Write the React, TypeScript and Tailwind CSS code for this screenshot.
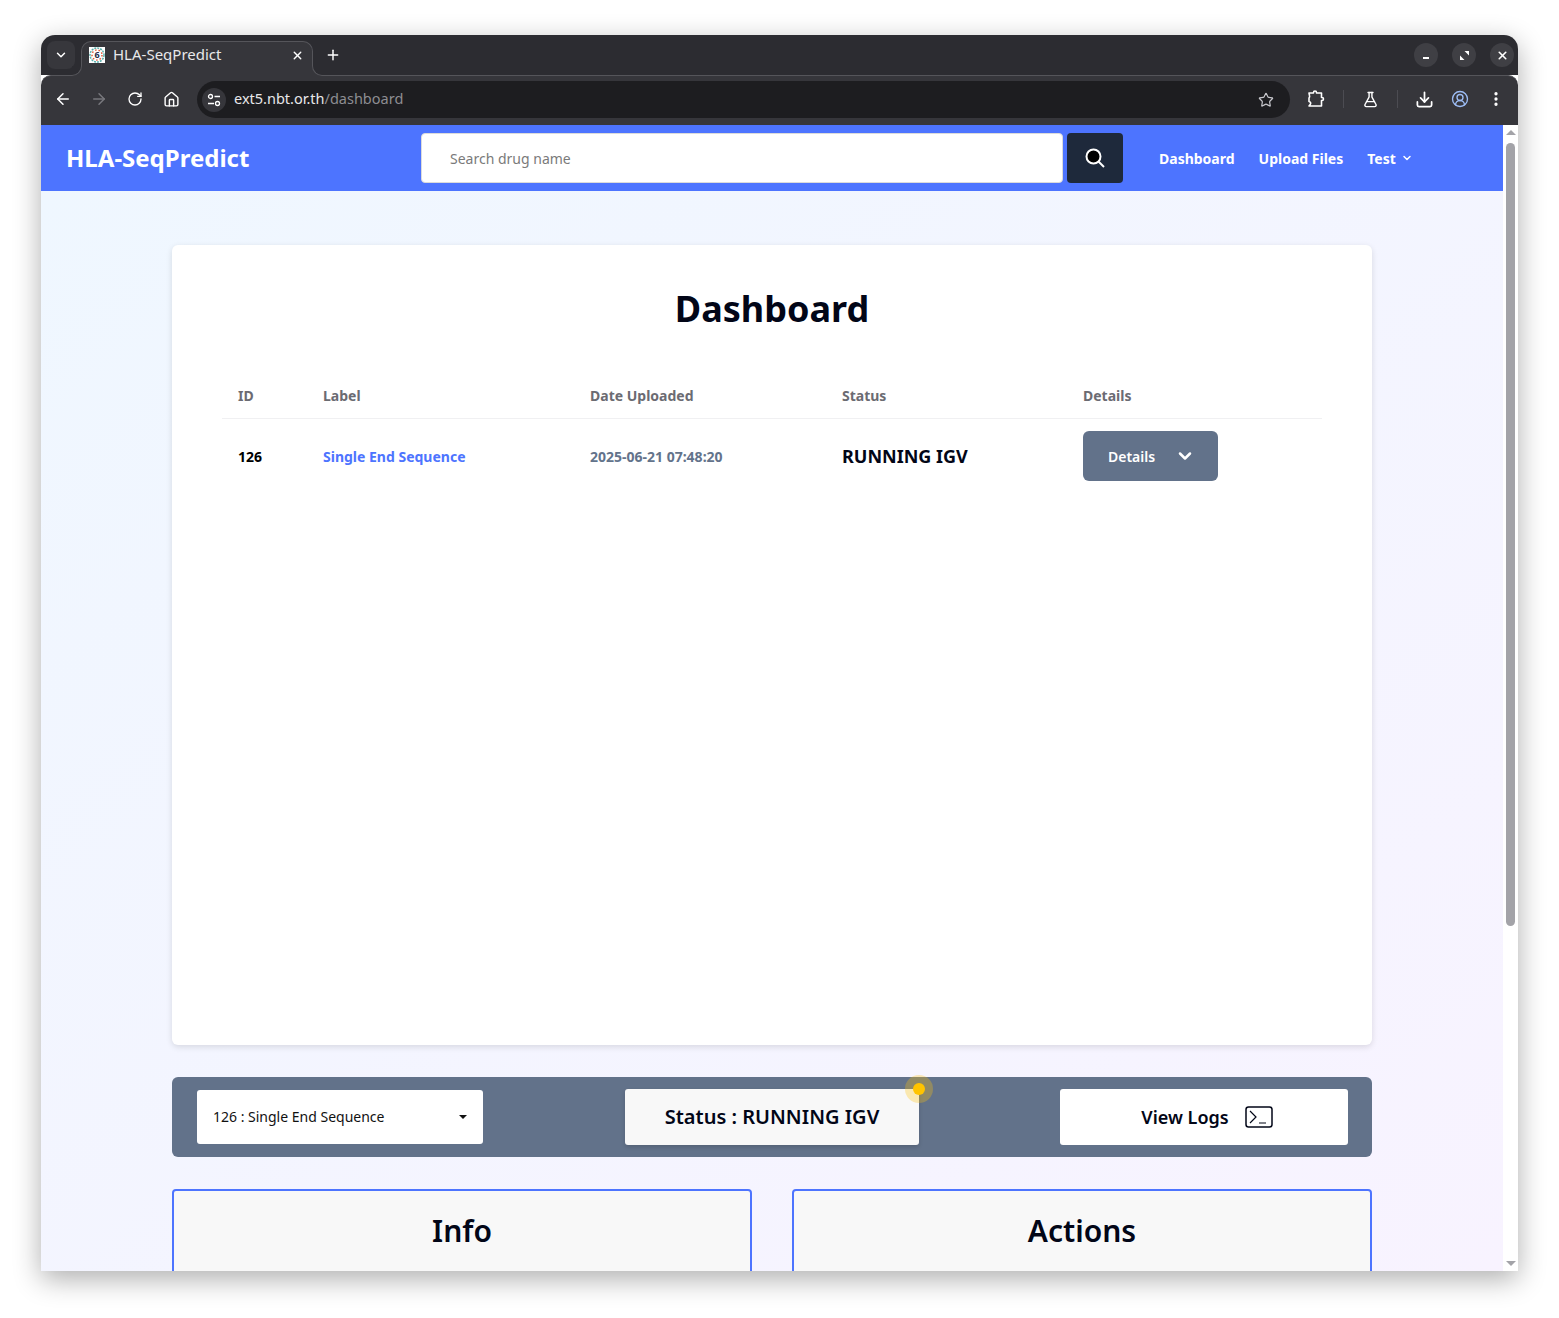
import React from 'react'
import { ArrowLeft, ArrowRight, ChevronDown, House, Plus, RotateCw, Star, X, EllipsisVertical, FlaskConical, Download, CircleUserRound } from 'lucide-react'

const ui = "font-['Noto_Sans',sans-serif]"

const Favicon = () => (
  <svg width="16" height="16" viewBox="0 0 16 16" className="shrink-0 bg-white">
    <circle cx="8" cy="8" r="7" fill="none" stroke="#5ab0ac" strokeWidth="1.500" strokeDasharray="2 1" />
    <circle cx="8" cy="8" r="5" fill="none" stroke="#e2603f" strokeWidth="1.500" strokeDasharray="1.500 2" />
    <text x="8" y="11" textAnchor="middle" fontSize="9" fontWeight="700" fill="#1f2a44">6</text>
  </svg>
)

const ExtensionIcon = () => (
  <svg width="18" height="18" viewBox="0 0 18 18" fill="none" stroke="white" strokeWidth="1.600" strokeLinejoin="round">
    <path d="M2 3h4.500V2.500a1.500 1.500 0 0 1 3 0V3h5v4.500h.5a1.500 1.500 0 0 1 0 3H14.500V16H2l1.200-1.500a1.800 1.800 0 0 0-1.200-3V8a2.500 2.500 0 0 0 .5-2.500z" />
  </svg>
)

const TerminalIcon = () => (
  <svg width="28" height="22" viewBox="0 0 28 22" fill="none" stroke="#020617" strokeWidth="1.200">
    <rect x="1" y="1" width="26" height="20" rx="2.500" strokeWidth="1.500" />
    <path d="M5 5l6 6-6 6M14 17h7" />
  </svg>
)

const TunerIcon = () => (
  <svg width="14" height="14" viewBox="0 0 14 14" fill="none" stroke="white" strokeWidth="1.300">
    <circle cx="3.500" cy="3.500" r="2" />
    <path d="M7.500 3.500H13M1 10.500h6" />
    <circle cx="10.500" cy="10.500" r="2" />
  </svg>
)

const SearchGlass = () => (
  <svg width="22" height="22" viewBox="0 0 22 22" fill="none" stroke="white" strokeWidth="2">
    <circle cx="9.500" cy="9.500" r="7" fill="black" />
    <path d="M14.500 14.500L20 20" />
  </svg>
)

const WindowButton = ({ children }: { children: React.ReactNode }) => (
  <div className="flex h-6 w-6 items-center justify-center rounded-full bg-[#3f3f44]">{children}</div>
)

const BrowserChrome = () => (
  <div className={`${ui} shrink-0 text-white`}>
    <div className="flex h-[40px] items-end bg-[#2c2c31] pl-[6px] pr-[4px]">
      <div className="mb-[6px] flex h-[28px] w-[28px] items-center justify-center rounded-lg bg-[#37373c]">
        <ChevronDown size={14} strokeWidth={2.500} />
      </div>
      <div className="relative z-10 mb-[-1px] ml-[6px] flex h-[35px] w-[232px] items-center rounded-t-[10px] border border-b-0 border-[#55555a] bg-[#36363b] pb-[8px] pl-[7px] pr-[10px]">
        <span className="absolute bottom-0 left-[-10px] h-[10px] w-[10px] bg-[#36363b]">
          <span className="block h-full w-full rounded-br-[10px] border-r border-b border-[#55555a] bg-[#2c2c31]" />
        </span>
        <span className="absolute right-[-10px] bottom-0 h-[10px] w-[10px] bg-[#36363b]">
          <span className="block h-full w-full rounded-bl-[10px] border-b border-l border-[#55555a] bg-[#2c2c31]" />
        </span>
        <Favicon />
        <span className="ml-2 flex-1 pb-[2px] text-[15px] text-[#e8e8ea]">HLA-SeqPredict</span>
        <X size={13} strokeWidth={2.500} className="mr-[-2px]" />
      </div>
      <div className="mb-[8px] ml-[8px] flex h-6 w-6 items-center justify-center">
        <Plus size={16} strokeWidth={2.200} />
      </div>
      <div className="mb-[8px] ml-auto flex gap-[14px]">
        <WindowButton><span className="mt-[6px] h-[2px] w-[6px] bg-white" /></WindowButton>
        <WindowButton>
          <svg width="11" height="11" viewBox="0 0 11 11" fill="white"><path d="M5.500 1H10v4.500zM5.500 10H1V5.500z" /></svg>
        </WindowButton>
        <WindowButton><X size={13} strokeWidth={3} /></WindowButton>
      </div>
    </div>
    <div className="flex h-[50px] items-center rounded-t-[10px] border-t border-[#55555a] bg-[#36363b] pb-[3px] pl-[13px] pr-[13px]">
      <ArrowLeft size={18} strokeWidth={2} />
      <ArrowRight size={18} strokeWidth={2} className="ml-[18px] text-[#77777c]" />
      <RotateCw size={16} strokeWidth={2} className="ml-[19px]" />
      <House size={17} strokeWidth={2} className="ml-[20px]" />
      <div className="mt-[1px] ml-[17px] flex h-[37px] w-[1093px] items-center rounded-full bg-[#1d1d20] pl-[5px] pr-[16px]">
        <div className="flex h-6 w-6 items-center justify-center rounded-full bg-[#36363b]"><TunerIcon /></div>
        <span className="ml-[8px] flex-1 pb-[2px] text-[14.500px] text-[#e8e8ea]">ext5.nbt.or.th<span className="text-[#8d8d92]">/dashboard</span></span>
        <Star size={16} strokeWidth={1.800} className="text-[#c7c7cc]" />
      </div>
      <div className="ml-[17px]"><ExtensionIcon /></div>
      <div className="ml-[18px] h-[18px] w-px bg-[#4c4c52]" />
      <FlaskConical size={17} strokeWidth={2} className="ml-[18px]" />
      <div className="ml-[18px] h-[18px] w-px bg-[#4c4c52]" />
      <Download size={19} strokeWidth={2.200} className="ml-[17px]" />
      <CircleUserRound size={18} strokeWidth={1.800} className="ml-[17px] text-[#9dbdf5]" />
      <EllipsisVertical size={18} strokeWidth={2.400} className="ml-[18px]" />
    </div>
  </div>
)

const Navbar = () => (
  <div className="flex h-[66px] shrink-0 items-center bg-[#4d74ff] pl-[25px] text-white">
    <span className="w-[355px] text-[24px] font-bold">HLA-SeqPredict</span>
    <div className="flex h-[50px] w-[642px] items-center rounded-[4px] border border-[#dbdbdb] bg-white pl-[28px] text-[14px] text-[#7a7a7a]">
      Search drug name
    </div>
    <div className="ml-[4px] flex h-[50px] w-[56px] items-center justify-center rounded-[4px] bg-[#1e293b]">
      <SearchGlass />
    </div>
    <span className="ml-[36px] text-[14px] font-bold">Dashboard</span>
    <span className="ml-[24px] text-[14px] font-bold">Upload Files</span>
    <span className="ml-[24px] text-[14px] font-bold">Test</span>
    <ChevronDown size={12} strokeWidth={3} className="ml-[5px]" />
  </div>
)

const DashboardCard = () => (
  <div className="h-[800px] rounded-md bg-white px-[50px] pt-[40px] shadow-[0_2px_6px_rgba(10,10,10,0.12)]">
    <h1 className="text-center text-[36px] leading-[48px] font-bold text-[#020617]">Dashboard</h1>
    <div className="mt-[52px] grid grid-cols-[85px_267px_252px_241px_1fr] items-center border-b border-[#f0f0f2] pb-[12px] text-[14px] font-bold text-[#6b6b72]">
      <span className="pl-4">ID</span>
      <span className="pl-4">Label</span>
      <span className="pl-4">Date Uploaded</span>
      <span className="pl-4">Status</span>
      <span className="pl-4">Details</span>
    </div>
    <div className="grid grid-cols-[85px_267px_252px_241px_1fr] items-center pt-[12px] text-[14px] font-bold">
      <span className="pl-4 text-black">126</span>
      <span className="pl-4 text-[#4d74ff]">Single End Sequence</span>
      <span className="pl-4 text-[#63738b]">2025-06-21 07:48:20</span>
      <span className="pl-4 text-[18px] text-[#020617]">RUNNING IGV</span>
      <div className="pl-4">
        <div className="flex h-[50px] w-[135px] items-center rounded-md bg-[#62728a] pl-[25px] text-white">
          <span className="font-semibold">Details</span>
          <ChevronDown size={20} strokeWidth={3} className="ml-[20px]" />
        </div>
      </div>
    </div>
  </div>
)

const StatusBar = () => (
  <div className="mt-[32px] flex h-[80px] items-center rounded-md bg-[#62728a] pl-[25px] pr-[24px]">
    <div className="flex h-[54px] w-[286px] items-center rounded-[3px] bg-white pb-[2px] pl-[16px] pr-[16px] text-[14px] text-[#111]">
      <span className="flex-1">126 : Single End Sequence</span>
      <span className="mt-[2px] h-0 w-0 border-x-[4px] border-t-[4px] border-x-transparent border-t-[#111]" />
    </div>
    <div className="relative ml-[142px] flex h-[56px] w-[294px] items-center justify-center rounded-[3px] bg-[#f8f8f8] text-[20px] font-semibold text-[#020617] shadow-[0_2px_4px_rgba(10,10,10,0.15)]">
      Status : RUNNING IGV
      <span className="absolute top-[-14px] right-[-14px] flex h-[28px] w-[28px] items-center justify-center rounded-full bg-[#ffc107]/30">
        <span className="h-[12px] w-[12px] rounded-full bg-[#ffc400]" />
      </span>
    </div>
    <div className="ml-auto flex h-[56px] w-[288px] items-center justify-center gap-[16px] rounded-[3px] bg-white pl-[6px] text-[18px] font-semibold text-[#020617]">
      View Logs
      <TerminalIcon />
    </div>
  </div>
)

const Panel = ({ title }: { title: string }) => (
  <div className="h-[120px] rounded-[4px] border-2 border-[#4d74ff] bg-[#f8f8f8] pt-[18px] text-center text-[30px] leading-[44px] font-semibold text-[#020617]">
    {title}
  </div>
)

const Scrollbar = () => (
  <div className="flex w-[15px] shrink-0 flex-col items-center bg-white pt-[5px] pb-[5px]">
    <span className="h-0 w-0 border-x-[5px] border-b-[5px] border-x-transparent border-b-[#a3a3a8]" />
    <span className="mt-[8px] h-[783px] w-[9px] rounded-full bg-[#a3a3a8]" />
    <span className="mt-auto h-0 w-0 border-x-[5px] border-t-[5px] border-x-transparent border-t-[#a3a3a8]" />
  </div>
)

export default function App() {
  return (
    <div className={`${ui} h-[1318px] w-[1559px] overflow-hidden bg-white pt-[35px] pl-[41px]`}>
      <div className="flex h-[1236px] w-[1477px] flex-col overflow-hidden rounded-t-[14px] bg-white shadow-[0_8px_28px_rgba(0,0,0,0.32)]">
        <BrowserChrome />
        <div className="flex min-h-0 flex-1">
          <div className="flex min-w-0 flex-1 flex-col overflow-hidden">
            <Navbar />
            <div className="flex-1 overflow-hidden bg-gradient-to-br from-[#eff7ff] to-[#f8f3ff] pt-[54px] pl-[131px]">
              <div className="w-[1200px]">
                <DashboardCard />
                <StatusBar />
                <div className="mt-[32px] grid grid-cols-2 gap-[40px]">
                  <Panel title="Info" />
                  <Panel title="Actions" />
                </div>
              </div>
            </div>
          </div>
          <Scrollbar />
        </div>
      </div>
    </div>
  )
}
